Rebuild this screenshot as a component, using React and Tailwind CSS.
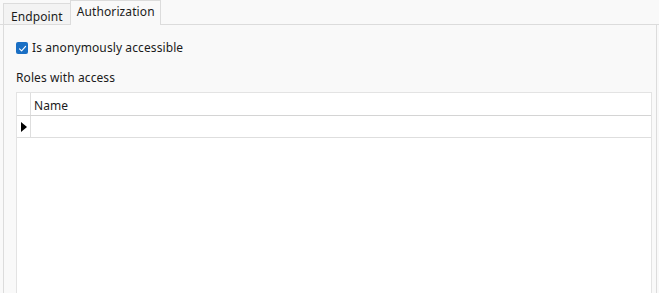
import React from 'react';

const font = { fontFamily: '"Noto Sans", "Open Sans", sans-serif' };

function Tab({ label, active }) {
  if (active) {
    return (
      <div className="h-[25px] pl-[6px] pr-[5px] pt-[3px] border border-b-0 border-[#dcdcdc] bg-[#f9f9f9] text-[12px] leading-[16px] tracking-[0.1px] text-[#1b1b1b]">
        {label}
      </div>
    );
  }
  return (
    <div className="h-[22px] px-[7px] pt-[5px] border border-r-0 border-[#dcdcdc] bg-[#f3f3f3] text-[12px] leading-[16px] tracking-[0.1px] text-[#1b1b1b]">
      {label}
    </div>
  );
}

function Checkbox() {
  return (
    <div className="w-[12px] h-[12px] rounded-[2px] bg-[#1a6fc4] flex items-center justify-center">
      <svg width="9" height="9" viewBox="0 0 9 9" fill="none">
        <path d="M1.5 4.8 L3.6 6.8 L7.6 2.4" stroke="white" strokeWidth="1.1" strokeLinecap="round" strokeLinejoin="round" />
      </svg>
    </div>
  );
}

export default function App() {
  return (
    <div className="w-[659px] h-[293px] bg-[#f9f9f9] overflow-hidden flex flex-col" style={font}>
      {/* tab strip */}
      <div className="flex items-end h-[25px] shrink-0">
        <div className="w-[3px] h-full border-b border-[#dcdcdc]" />
        <Tab label="Endpoint" />
        <Tab label="Authorization" active />
        <div className="flex-1 h-full border-b border-[#dcdcdc]" />
      </div>

      {/* tab page */}
      <div className="flex-1 flex flex-col mx-[3px] mr-[2px] border-x border-[#dcdcdc] pl-[12px] pr-[4px] pt-[15px]">
        <label className="flex items-center gap-[4px] text-[12px] leading-[16px] tracking-[0.1px] text-[#1b1b1b]">
          <Checkbox />
          <span>Is anonymously accessible</span>
        </label>

        <div className="mt-[14px] text-[12px] leading-[16px] tracking-[0.1px] text-[#1b1b1b]">Roles with access</div>

        {/* grid */}
        <div className="mt-[6px] flex-1 bg-white border border-[#e3e3e3] border-b-0">
          <div className="flex h-[23px] border-b border-[#d4d4d4]">
            <div className="w-[14px] border-r border-[#dedede]" />
            <div className="pl-[3px] pt-[5px] text-[12px] leading-[16px] tracking-[0.1px] text-[#1b1b1b]">Name</div>
          </div>
          <div className="flex h-[22px] border-b border-[#dedede]">
            <div className="w-[14px] pl-[4px] border-r border-[#dedede] flex items-center">
              <svg width="6" height="10" viewBox="0 0 6 10">
                <path d="M0 0 L6 5 L0 10 Z" fill="#000" />
              </svg>
            </div>
          </div>
        </div>
      </div>
    </div>
  );
}
